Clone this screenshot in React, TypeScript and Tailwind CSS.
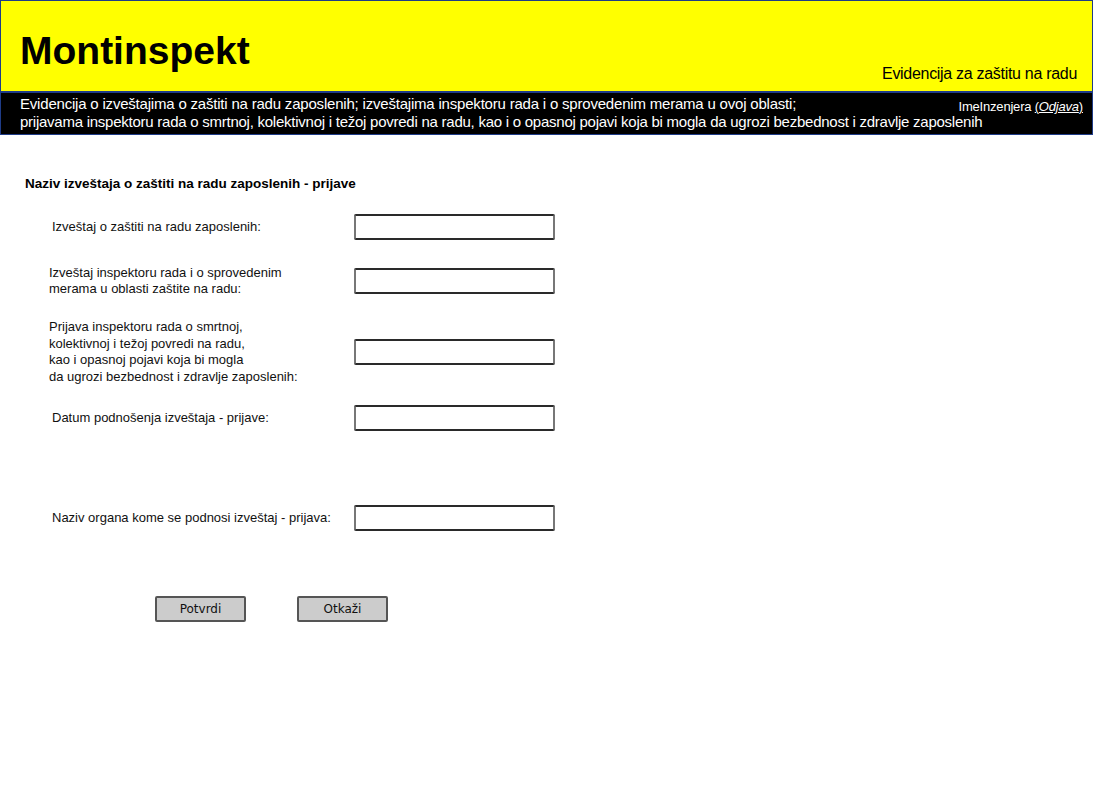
const font = "font-['Liberation_Sans',Arial,sans-serif]";

function Field() {
  return (
    <div className="h-[26px] w-[201px] shrink-0 rounded-[2px] border-2 border-[#777] border-y-[#2a2a2a] bg-white" />
  );
}

interface RowProps {
  label: string[];
  indent: string;
  height: string;
  top: string;
}

function FormRow({ label, indent, height, top }: RowProps) {
  return (
    <div className={`flex items-center ${height} ${top}`}>
      <div className={`w-[354px] shrink-0 ${indent} text-[13px] leading-[16.5px] text-[#111]`}>
        {label.map((line) => (
          <p key={line}>{line}</p>
        ))}
      </div>
      <Field />
    </div>
  );
}

export default function App() {
  return (
    <div className={`${font} min-h-[809px] w-[1093px] bg-white`}>
      <header className="border border-[#1f3c88]">
        <div className="flex h-[90px] items-end justify-between bg-[#ffff00] pb-[9px] pl-[19px] pr-[15px]">
          <h1 className="mb-[12px] text-[39px] font-bold leading-none text-black">
            Montinspekt
          </h1>
          <p className="text-[16px] leading-none tracking-[-0.3px] text-black">
            Evidencija za zaštitu na radu
          </p>
        </div>
        <div className="h-[43px] border-t-2 border-[#1f3c88] bg-black pl-[19px] pr-[9px] pt-[2px] text-white">
          <div className="flex items-start justify-between">
            <p className="whitespace-nowrap text-[15px] leading-[17px] tracking-[-0.2px]">
              Evidencija o izveštajima o zaštiti na radu zaposlenih; izveštajima
              inspektoru rada i o sprovedenim merama u ovoj oblasti;
            </p>
            <div className="whitespace-nowrap pt-[5px] text-[13px] leading-none tracking-[-0.2px]">
              ImeInzenjera{" "}
              <span className="underline">
                (<span className="italic">Odjava</span>)
              </span>
            </div>
          </div>
          <p className="whitespace-nowrap text-[15px] leading-[17px] tracking-[-0.25px]">
            prijavama inspektoru rada o smrtnoj, kolektivnoj i težoj povredi na
            radu, kao i o opasnoj pojavi koja bi mogla da ugrozi bezbednost i
            zdravlje zaposlenih
          </p>
        </div>
      </header>

      <main className="pl-[25px] pt-[41px]">
        <h2 className="text-[13.5px] font-bold leading-[16px] text-black">
          Naziv izveštaja o zaštiti na radu zaposlenih - prijave
        </h2>
        <div className="-ml-[25px]">
          <FormRow
            label={["Izveštaj o zaštiti na radu zaposlenih:"]}
            indent="pl-[52px]"
            height="h-[26px]"
            top="mt-[22px]"
          />
          <FormRow
            label={[
              "Izveštaj inspektoru rada i o sprovedenim",
              "merama u oblasti zaštite na radu:",
            ]}
            indent="pl-[49px]"
            height="h-[26px]"
            top="mt-[28px]"
          />
          <FormRow
            label={[
              "Prijava inspektoru rada o smrtnoj,",
              "kolektivnoj i težoj povredi na radu,",
              "kao i opasnoj pojavi koja bi mogla",
              "da ugrozi bezbednost i zdravlje zaposlenih:",
            ]}
            indent="pl-[49px]"
            height="h-[66px]"
            top="mt-[25px]"
          />
          <FormRow
            label={["Datum podnošenja izveštaja - prijave:"]}
            indent="pl-[52px]"
            height="h-[26px]"
            top="mt-[20px]"
          />
          <FormRow
            label={["Naziv organa kome se podnosi izveštaj - prijava:"]}
            indent="pl-[52px]"
            height="h-[26px]"
            top="mt-[74px]"
          />
          <div className="mt-[65px] flex gap-[51px] pl-[155px]">
            <button className="h-[26px] w-[91px] rounded-[2px] border-2 border-[#555] bg-[#cccccc] text-[12px] text-[#111] font-['DejaVu_Sans',sans-serif]">
              Potvrdi
            </button>
            <button className="h-[26px] w-[91px] rounded-[2px] border-2 border-[#555] bg-[#cccccc] text-[12px] text-[#111] font-['DejaVu_Sans',sans-serif]">
              Otkaži
            </button>
          </div>
        </div>
      </main>
    </div>
  );
}
